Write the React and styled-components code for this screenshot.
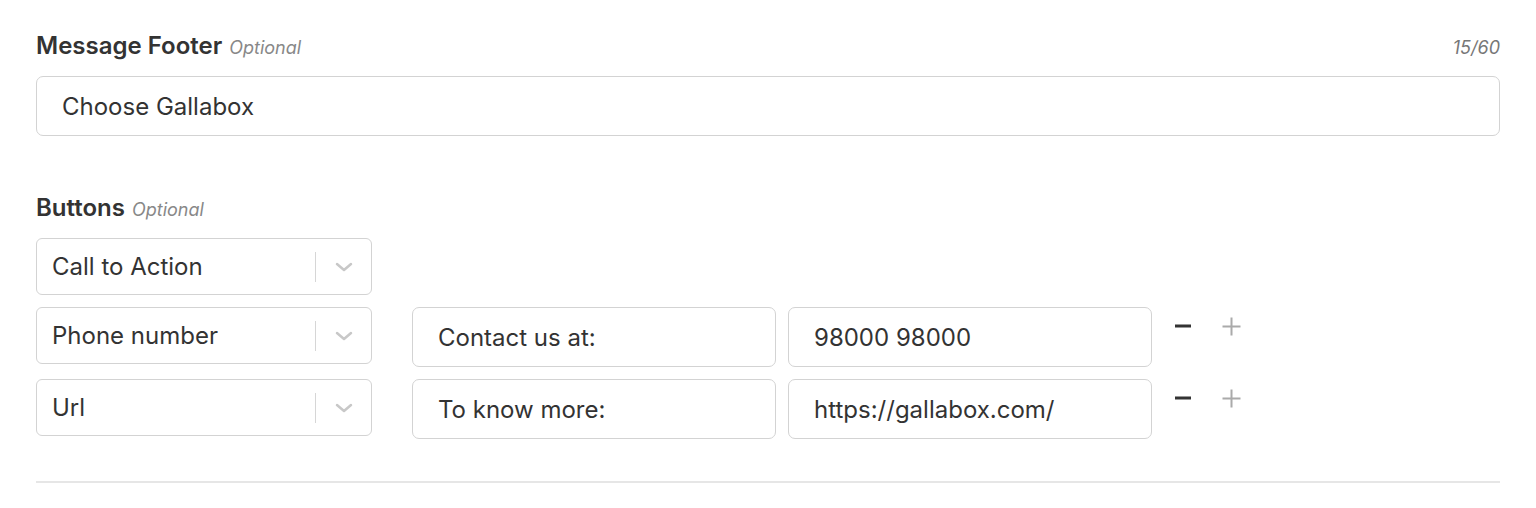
import React from "react";
import styled, { createGlobalStyle } from "styled-components";

const Global = createGlobalStyle`
  html, body { margin: 0; padding: 0; background: #fff; }
  body {
    font-family: Inter, "Noto Sans", sans-serif;
    color: #333;
  }
  * { box-sizing: border-box; }
`;

const Page = styled.div`
  padding: 34px 36px 0;
  display: flex;
  flex-direction: column;
`;

const Section = styled.section`
  display: flex;
  flex-direction: column;
  gap: 18px;
  margin-bottom: ${(p) => p.$mb || 0}px;
`;

const LabelRow = styled.div`
  display: flex;
  align-items: baseline;
  justify-content: space-between;
  height: 24px;
  line-height: 24px;
`;

const Label = styled.div`
  font-size: 24px;
  font-weight: 600;
  color: #333;
  display: flex;
  align-items: baseline;
  gap: 7px;
`;

const Optional = styled.span`
  font-size: 18px;
  font-weight: 400;
  font-style: italic;
  color: #888;
`;

const Counter = styled.span`
  font-size: 18px;
  font-style: italic;
  color: #777;
`;

const TextBox = styled.div`
  height: 60px;
  width: ${(p) => (p.$w ? `${p.$w}px` : "100%")};
  border: 1px solid #d3d3d3;
  border-radius: 7px;
  display: flex;
  align-items: center;
  padding: 0 25px;
  font-size: 24px;
  color: #333;
  background: #fff;
  flex-shrink: 0;
`;

const Rows = styled.div`
  display: flex;
  flex-direction: column;
  gap: 12px;
`;

const Row = styled.div`
  display: flex;
  align-items: flex-start;
  gap: 12px;
`;

const Select = styled.div`
  width: 336px;
  height: 57px;
  border: 1px solid #d3d3d3;
  border-radius: 6px;
  display: flex;
  align-items: center;
  padding-left: 15px;
  font-size: 24px;
  color: #333;
  margin-right: 28px;
  flex-shrink: 0;
`;

const SelectValue = styled.span`
  flex: 1;
`;

const Separator = styled.span`
  width: 1px;
  height: 30px;
  background: #d6d6d6;
`;

const Chevron = styled.span`
  width: 55px;
  display: flex;
  justify-content: center;
  align-items: center;
  color: #c8c8c8;
`;

const Actions = styled.div`
  display: flex;
  align-items: center;
  gap: 30px;
  padding: 2px 0 0 10px;
  height: 36px;
`;

const IconBtn = styled.span`
  display: flex;
  align-items: center;
  justify-content: center;
  color: ${(p) => (p.$muted ? "#aaa" : "#333")};
`;

const Divider = styled.hr`
  border: 0;
  border-top: 2px solid #e6e6e6;
  margin: 0;
`;

const ChevronIcon = () => (
  <svg width="18" height="10" viewBox="0 0 18 10">
    <path d="M2 2 L9 8 L16 2" fill="none" stroke="currentColor" strokeWidth="2.5" strokeLinecap="round" strokeLinejoin="round" />
  </svg>
);

const Minus = () => (
  <svg width="18" height="4" viewBox="0 0 18 4">
    <rect x="1" y="0.5" width="16" height="3" fill="currentColor" />
  </svg>
);

const Plus = () => (
  <svg width="19" height="19" viewBox="0 0 19 19">
    <rect x="8.5" y="0.5" width="2" height="18" fill="currentColor" />
    <rect x="0.5" y="8.5" width="18" height="2" fill="currentColor" />
  </svg>
);

const SelectBox = ({ value }) => (
  <Select>
    <SelectValue>{value}</SelectValue>
    <Separator />
    <Chevron>
      <ChevronIcon />
    </Chevron>
  </Select>
);

const rows = [
  { type: "Phone number", text: "Contact us at:", value: "98000 98000" },
  { type: "Url", text: "To know more:", value: "https://gallabox.com/" },
];

export default function App() {
  return (
    <>
      <Global />
      <Page>
        <Section $mb={60}>
          <LabelRow>
            <Label>
              Message Footer <Optional>Optional</Optional>
            </Label>
            <Counter>15/60</Counter>
          </LabelRow>
          <TextBox>Choose Gallabox</TextBox>
        </Section>
        <Section $mb={42}>
          <LabelRow>
            <Label>
              Buttons <Optional>Optional</Optional>
            </Label>
          </LabelRow>
          <Rows>
            <Row>
              <SelectBox value="Call to Action" />
            </Row>
            {rows.map((r) => (
              <Row key={r.type}>
                <SelectBox value={r.type} />
                <TextBox $w={364}>{r.text}</TextBox>
                <TextBox $w={364}>{r.value}</TextBox>
                <Actions>
                  <IconBtn>
                    <Minus />
                  </IconBtn>
                  <IconBtn $muted>
                    <Plus />
                  </IconBtn>
                </Actions>
              </Row>
            ))}
          </Rows>
        </Section>
        <Divider />
      </Page>
    </>
  );
}
